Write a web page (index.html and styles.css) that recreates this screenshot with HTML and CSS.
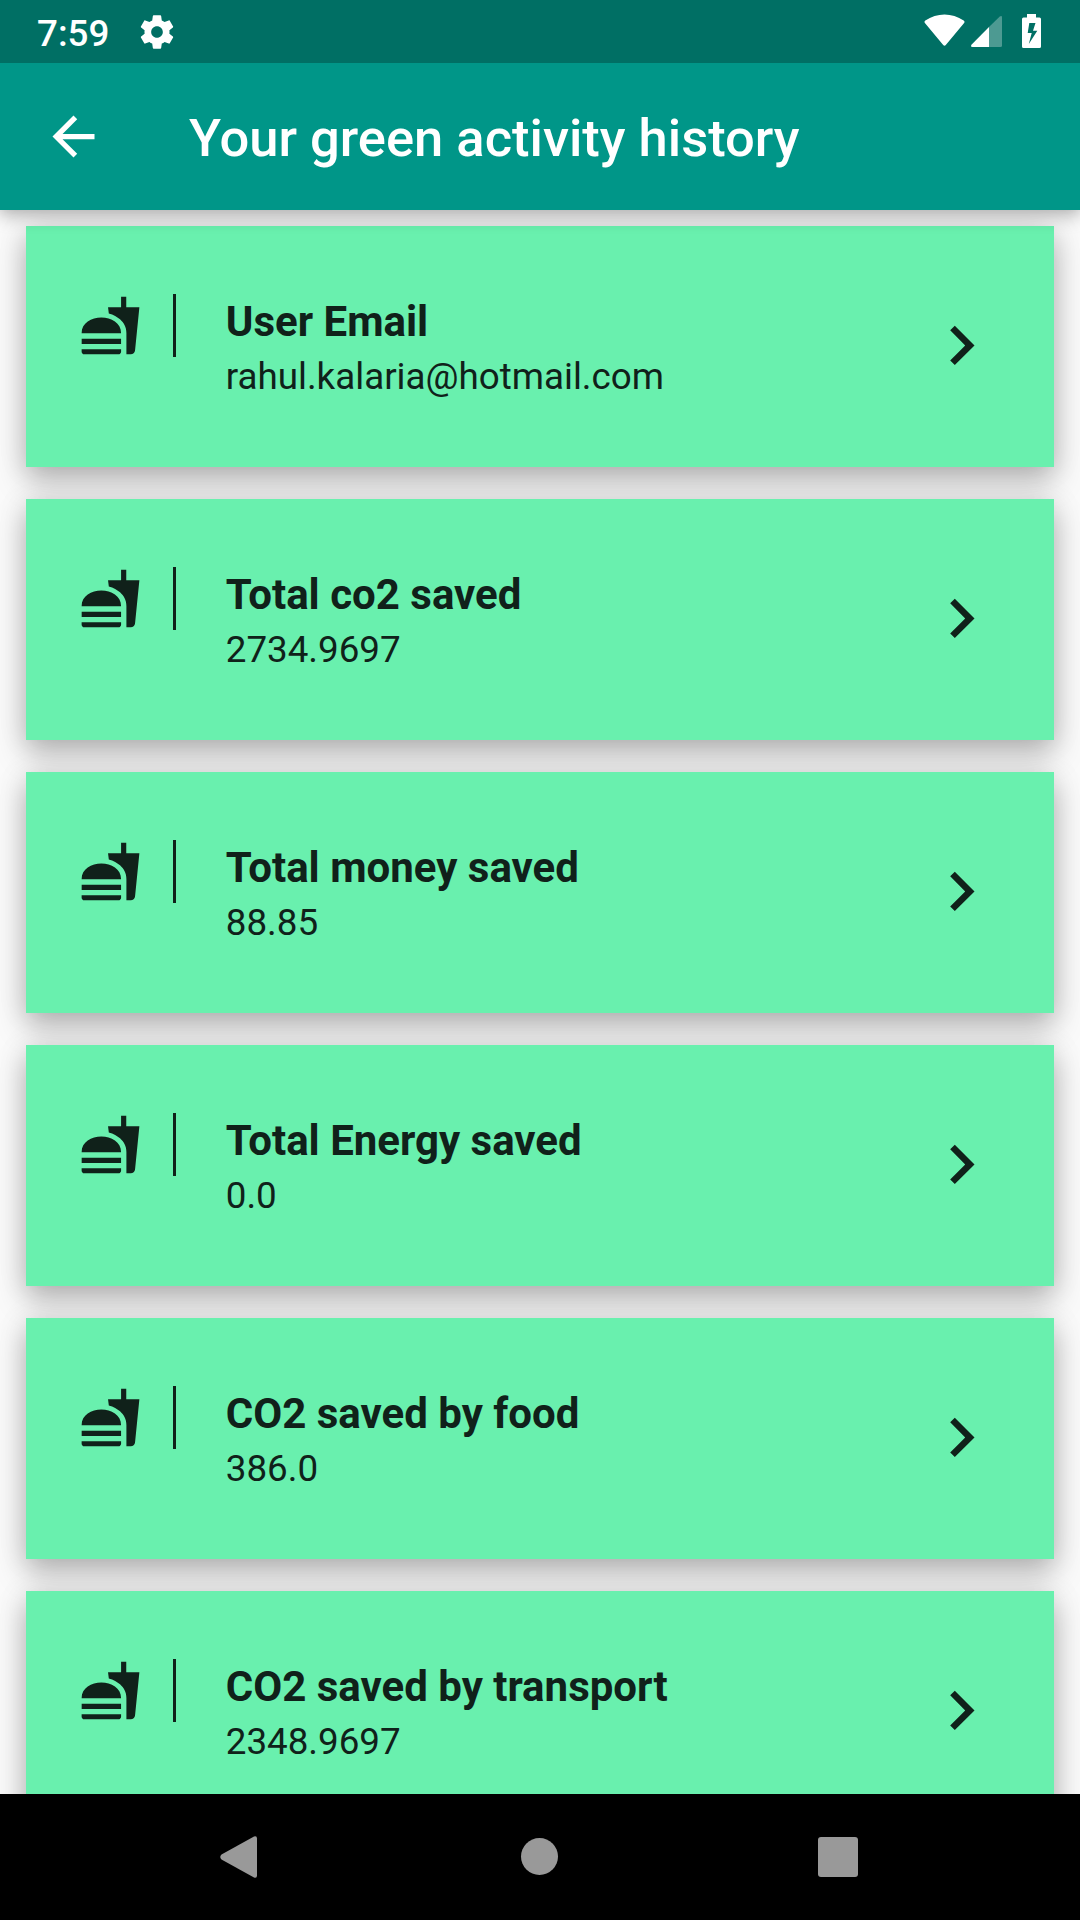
FILE: index.html
```html
<!DOCTYPE html>
<html lang="en">
<head>
<meta charset="utf-8">
<title>Your green activity history</title>
<link rel="stylesheet" href="styles.css">
</head>
<body>
<svg class="defs" aria-hidden="true">
  <symbol id="fastfood" viewBox="0 0 24 24"><path d="M18.06 22.99h1.66c.84 0 1.53-.64 1.63-1.46L23 5.05h-5V1h-1.97v4.05h-4.97l.3 2.34c1.71.47 3.31 1.32 4.27 2.26 1.44 1.42 2.43 2.89 2.43 5.29v8.05zM1 21.99V21h15.03v.99c0 .55-.45 1-1.01 1H2.01c-.56 0-1.01-.45-1.01-1zm15.03-7c0-8-15.03-8-15.03 0h15.03zM1.02 17h15v2h-15z"/></symbol>
  <symbol id="chevron" viewBox="0 0 24 24"><path d="M8.59 16.59 13.17 12 8.59 7.41 10 6l6 6-6 6z"/></symbol>
</svg>
<div class="screen">
  <header class="status">
    <span class="clock">7:59</span>
    <svg class="gear" viewBox="0 0 24 24"><path d="M19.43 12.98c.04-.32.07-.64.07-.98s-.03-.66-.07-.98l2.11-1.65c.19-.15.24-.42.12-.64l-2-3.46c-.12-.22-.39-.3-.61-.22l-2.49 1c-.52-.4-1.08-.73-1.69-.98l-.38-2.65C14.46 2.18 14.25 2 14 2h-4c-.25 0-.46.18-.49.42l-.38 2.65c-.61.25-1.17.59-1.69.98l-2.49-1c-.23-.09-.49 0-.61.22l-2 3.46c-.13.22-.07.49.12.64l2.11 1.65c-.04.32-.07.65-.07.98s.03.66.07.98l-2.11 1.65c-.19.15-.24.42-.12.64l2 3.46c.12.22.39.3.61.22l2.49-1c.52.4 1.08.73 1.69.98l.38 2.65c.03.24.24.42.49.42h4c.25 0 .46-.18.49-.42l.38-2.65c.61-.25 1.17-.59 1.69-.98l2.49 1c.23.09.49 0 .61-.22l2-3.46c.12-.22.07-.49-.12-.64l-2.11-1.65zM12 15.5c-1.93 0-3.5-1.57-3.5-3.5s1.57-3.5 3.5-3.5 3.5 1.57 3.5 3.5-1.57 3.5-3.5 3.5z"/></svg>
    <svg class="indicators" viewBox="0 0 120 36">
      <path d="M1.1 9.2Q-.3 7.8 1.3 6.6C13-1.600 28-1.600 39.7 6.6Q41.3 7.8 39.9 9.2L21.8 31Q20.5 32.4 19.2 31Z"/>
      <path opacity=".3" d="M65 13 75.500 2.700Q78 1 78 3.500V31.500Q78 33 76.500 33H65Z"/>
      <path d="M65 13V33H48.500Q46 33 47.700 30.500Z"/>
      <path fill-rule="evenodd" d="M103 0h9v3.500h3.500q1.500 0 1.500 1.500v27.500q0 1.500-1.500 1.500h-16q-1.500 0-1.500-1.500V5q0-1.500 1.500-1.500h3.500zM105.300 9 103.700 19h4L104.800 30 113.300 16.700h-4.300L111.500 9z"/>
    </svg>
  </header>
  <div class="appbar">
    <svg class="back" viewBox="0 0 24 24"><path d="M20 11H7.830l5.590-5.590L12 4l-8 8 8 8 1.410-1.410L7.830 13H20v-2z"/></svg>
    <h1 class="heading">Your green activity history</h1>
  </div>
  <main class="list">
    <section class="card">
      <div class="lead"><svg class="food"><use href="#fastfood"/></svg></div>
      <div class="text"><h2 class="title">User Email</h2><p class="value">rahul.kalaria@hotmail.com</p></div>
      <svg class="chevron"><use href="#chevron"/></svg>
    </section>
    <section class="card">
      <div class="lead"><svg class="food"><use href="#fastfood"/></svg></div>
      <div class="text"><h2 class="title">Total co2 saved</h2><p class="value">2734.9697</p></div>
      <svg class="chevron"><use href="#chevron"/></svg>
    </section>
    <section class="card">
      <div class="lead"><svg class="food"><use href="#fastfood"/></svg></div>
      <div class="text"><h2 class="title">Total money saved</h2><p class="value">88.85</p></div>
      <svg class="chevron"><use href="#chevron"/></svg>
    </section>
    <section class="card">
      <div class="lead"><svg class="food"><use href="#fastfood"/></svg></div>
      <div class="text"><h2 class="title">Total Energy saved</h2><p class="value">0.0</p></div>
      <svg class="chevron"><use href="#chevron"/></svg>
    </section>
    <section class="card">
      <div class="lead"><svg class="food"><use href="#fastfood"/></svg></div>
      <div class="text"><h2 class="title">CO2 saved by food</h2><p class="value">386.0</p></div>
      <svg class="chevron"><use href="#chevron"/></svg>
    </section>
    <section class="card">
      <div class="lead"><svg class="food"><use href="#fastfood"/></svg></div>
      <div class="text"><h2 class="title">CO2 saved by transport</h2><p class="value">2348.9697</p></div>
      <svg class="chevron"><use href="#chevron"/></svg>
    </section>
  </main>
  <nav class="nav">
    <svg class="nav-back" viewBox="0 0 38 42"><path d="M37 2.500v37q0 3-3 2L1.500 23.500q-2.500-2.500 0-5L34 .5q3-1 3 2z"/></svg>
    <span class="nav-home"></span>
    <span class="nav-recent"></span>
  </nav>
</div>
</body>
</html>
```
FILE: styles.css
```css
* { box-sizing: border-box; }
body { margin: 0; font-family: Roboto, sans-serif; }
h1, h2, p { margin: 0; }
svg { display: block; flex: none; fill: currentColor; }
.defs { display: none; }

.screen {
  width: 1080px;
  height: 1920px;
  display: flex;
  flex-direction: column;
  overflow: hidden;
  background: #fafafa;
}

.status {
  height: 63px;
  flex: none;
  display: flex;
  align-items: flex-start;
  padding: 0 37px;
  background: #006f64;
  color: #fff;
  z-index: 2;
}
.clock {
  width: 100px;
  font-size: 36.75px;
  line-height: 43px;
  padding-top: 12px;
  font-weight: 500;
}
.gear { width: 40px; height: 40px; margin-top: 11.5px; }
.indicators { width: 120px; height: 36px; margin: 14px -1px 0 auto; }

.appbar {
  height: 147px;
  flex: none;
  display: flex;
  align-items: center;
  padding-left: 42px;
  gap: 84px;
  background: #009688;
  color: #fff;
  z-index: 1;
  box-shadow: 0 7px 16px rgba(0, 0, 0, .24), 0 0 10px rgba(0, 0, 0, .08);
}
.back { width: 63px; height: 63px; }
.heading { font-size: 52.5px; font-weight: 500; line-height: 62px; padding-top: 3px; white-space: nowrap; }

.list {
  flex: 1;
  min-height: 0;
  overflow: hidden;
  display: flex;
  flex-direction: column;
  gap: 31.5px;
  padding: 15.75px 26.25px 0;
}
.card {
  height: 241.5px;
  flex: none;
  display: flex;
  align-items: center;
  padding: 0 52.5px;
  background: #69f0ae;
  color: #10211a;
  box-shadow: 0 14px 28px rgba(0, 0, 0, .26), 0 0 28px rgba(0, 0, 0, .1);
}
.lead {
  height: 63px;
  width: 97px;
  flex: none;
  align-self: flex-start;
  margin-top: 68px;
  border-right: 3px solid #10211a;
}
.food { width: 63px; height: 63px; }
.text { flex: 1; margin-left: 50px; padding-top: 2px; }
.title { font-size: 42px; font-weight: 700; line-height: 50px; }
.value { font-size: 36.75px; line-height: 44px; margin-top: 8px; }
.chevron { width: 78.75px; height: 78.75px; margin: 0 .75px 1.5px 0; }

.nav {
  height: 126px;
  flex: none;
  display: flex;
  justify-content: space-between;
  align-items: center;
  padding: 0 222px 1px 220px;
  background: #000;
  color: #999;
  z-index: 1;
}
.nav-back { width: 38px; height: 42px; }
.nav-home { width: 37px; height: 37px; margin-left: 2px; border-radius: 50%; background: currentColor; }
.nav-recent { width: 40px; height: 40px; border-radius: 3px; background: currentColor; }
```
